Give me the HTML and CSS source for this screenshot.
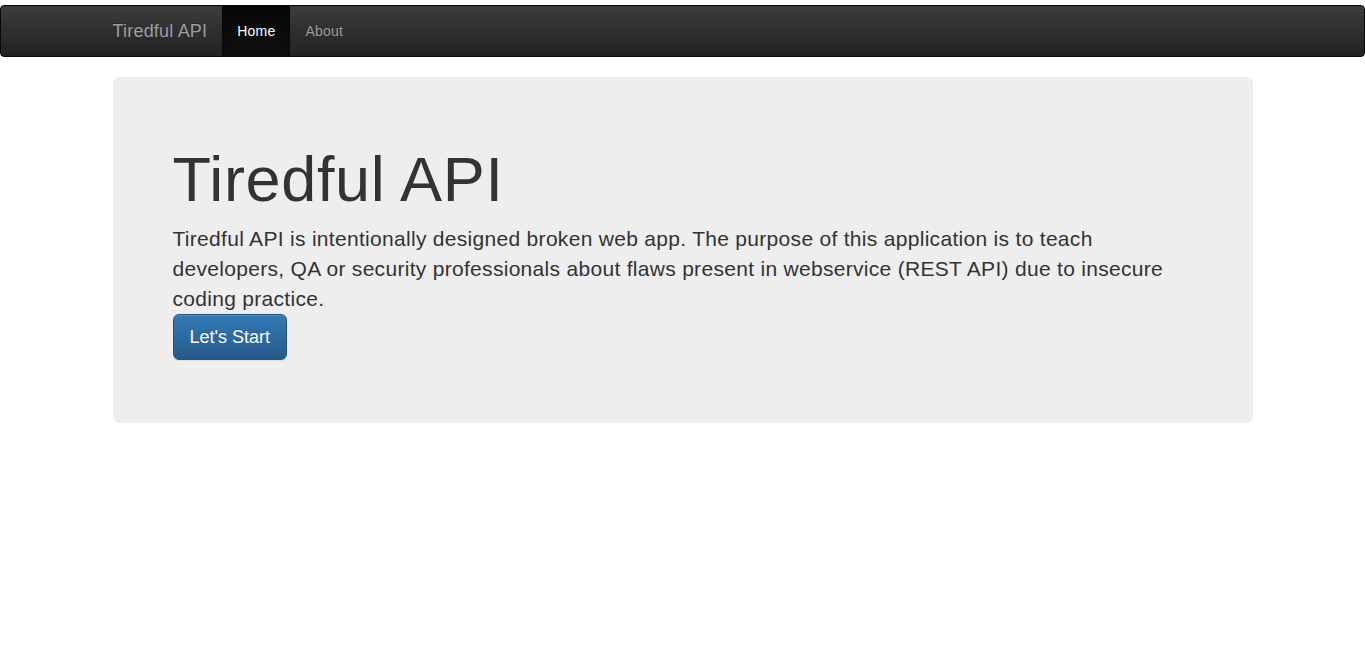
FILE: index.html
```html
<!DOCTYPE html>
<html lang="en">
<head>
<meta charset="utf-8">
<title>Tiredful API</title>
<link rel="stylesheet" href="styles.css">
</head>
<body>
<nav class="navbar">
  <div class="container nav-inner">
    <a class="brand" href="#">Tiredful API</a>
    <ul class="nav">
      <li class="active"><a href="#">Home</a></li>
      <li><a href="#">About</a></li>
    </ul>
  </div>
</nav>
<div class="container">
  <div class="jumbotron">
    <h1>Tiredful API</h1>
    <p class="lead">Tiredful API is intentionally designed broken web app. The purpose of this application is to teach developers, QA or security professionals about flaws present in webservice (REST API) due to insecure coding practice.</p>
    <div class="actions"><a class="btn" href="#">Let's Start</a></div>
  </div>
</div>
</body>
</html>
```

FILE: styles.css
```css
* { box-sizing: border-box; }
html { background: #fff; }
body {
  margin: 0;
  padding-top: 5px;
  font-family: "Liberation Sans", Arial, Helvetica, sans-serif;
  font-size: 14px;
  line-height: 1.42857143;
  color: #333;
  background: #fff;
}
a { text-decoration: none; }
.container {
  width: 1170px;
  margin: 0 auto;
  padding: 0 15px;
}
.navbar {
  min-height: 50px;
  margin-bottom: 20px;
  border: 1px solid #080808;
  border-radius: 4px;
  background: linear-gradient(to bottom, #3c3c3c 0, #222 100%);
}
.nav-inner {
  display: flex;
  align-items: stretch;
  height: 50px;
}
.brand {
  margin-left: -15px;
  padding: 15px;
  font-size: 18px;
  line-height: 20px;
  letter-spacing: 0.2px;
  height: 50px;
  color: #9d9d9d;
  text-shadow: 0 -1px 0 rgba(0,0,0,.25);
}
.nav {
  display: flex;
  list-style: none;
  margin: 0;
  padding: 0;
}
.nav a {
  display: block;
  padding: 15px;
  line-height: 20px;
  letter-spacing: 0.2px;
  color: #9d9d9d;
  text-shadow: 0 -1px 0 rgba(0,0,0,.25);
}
.nav .active a {
  color: #fff;
  background: linear-gradient(to bottom, #080808 0, #0f0f0f 100%);
  box-shadow: inset 0 3px 9px rgba(0,0,0,.25);
}
.jumbotron {
  background: #eee;
  border-radius: 6px;
  padding: 48px 60px;
}
.jumbotron h1 {
  margin: 20px 0 10px;
  font-size: 63px;
  font-weight: 500;
  line-height: 1.1;
  letter-spacing: 0.65px;
  color: inherit;
}
.lead {
  margin: 0;
  font-size: 21px;
  font-weight: 200;
  line-height: 30px;
  letter-spacing: 0.3px;
}
.actions {
  display: flex;
  margin-bottom: 15px;
}
.btn {
  display: inline-block;
  padding: 10px 16px;
  font-size: 18px;
  line-height: 1.3333333;
  border-radius: 6px;
  color: #fff;
  border: 1px solid #245580;
  background: linear-gradient(to bottom, #337ab7 0, #265a88 100%);
  text-shadow: 0 -1px 0 rgba(0,0,0,.2);
  box-shadow: inset 0 1px 0 rgba(255,255,255,.15), 0 1px 1px rgba(0,0,0,.075);
}
```
